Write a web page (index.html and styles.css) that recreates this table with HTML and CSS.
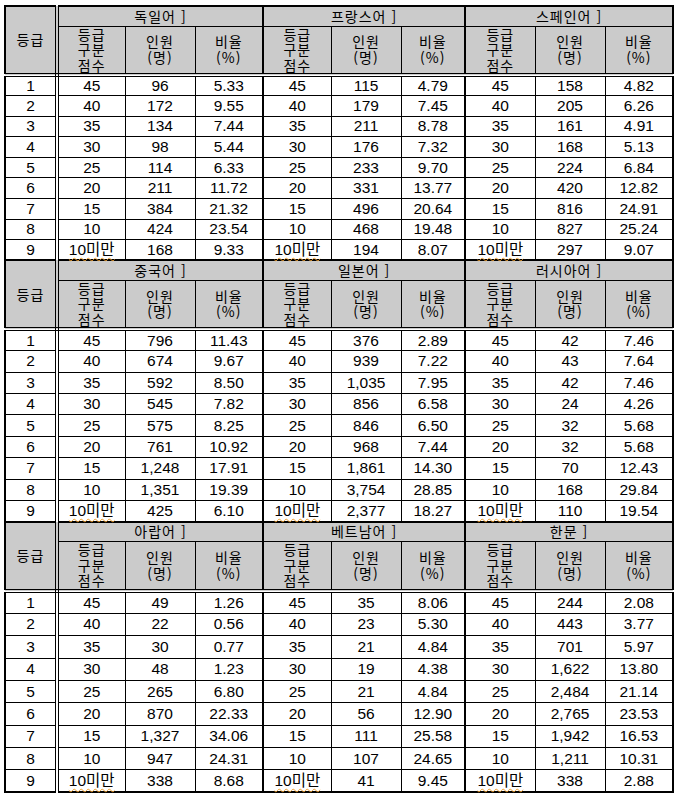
FILE: index.html
```html
<!DOCTYPE html>
<html lang="ko">
<head>
<meta charset="utf-8">
<title>등급 분포</title>
<link rel="stylesheet" href="styles.css">
</head>
<body>
<table class="grid">
<colgroup>
<col class="c-grade"><col class="c-a"><col class="c-b"><col class="c-c">
<col class="c-a"><col class="c-b"><col class="c-c2">
<col class="c-a3"><col class="c-b"><col class="c-c">
</colgroup>
<tbody class="s1">
<tr class="hd lang"><td class="g gh" rowspan="2">등급</td><td colspan="3" class="ge">독일어 ]</td><td colspan="3" class="ge">프랑스어 ]</td><td colspan="3">스페인어 ]</td></tr>
<tr class="hd sub"><td><div class="ln">등급</div><div class="ln">구분</div><div class="ln">점수</div></td><td><div class="ln">인원</div><div class="ln">(명)</div></td><td class="ge"><div class="ln">비율</div><div class="ln">(%)</div></td><td><div class="ln">등급</div><div class="ln">구분</div><div class="ln">점수</div></td><td><div class="ln">인원</div><div class="ln">(명)</div></td><td class="ge"><div class="ln">비율</div><div class="ln">(%)</div></td><td><div class="ln">등급</div><div class="ln">구분</div><div class="ln">점수</div></td><td><div class="ln">인원</div><div class="ln">(명)</div></td><td><div class="ln">비율</div><div class="ln">(%)</div></td></tr>
<tr><td class="g">1</td><td>45</td><td>96</td><td class="ge">5.33</td><td>45</td><td>115</td><td class="ge">4.79</td><td>45</td><td>158</td><td>4.82</td></tr>
<tr><td class="g">2</td><td>40</td><td>172</td><td class="ge">9.55</td><td>40</td><td>179</td><td class="ge">7.45</td><td>40</td><td>205</td><td>6.26</td></tr>
<tr><td class="g">3</td><td>35</td><td>134</td><td class="ge">7.44</td><td>35</td><td>211</td><td class="ge">8.78</td><td>35</td><td>161</td><td>4.91</td></tr>
<tr><td class="g">4</td><td>30</td><td>98</td><td class="ge">5.44</td><td>30</td><td>176</td><td class="ge">7.32</td><td>30</td><td>168</td><td>5.13</td></tr>
<tr><td class="g">5</td><td>25</td><td>114</td><td class="ge">6.33</td><td>25</td><td>233</td><td class="ge">9.70</td><td>25</td><td>224</td><td>6.84</td></tr>
<tr><td class="g">6</td><td>20</td><td>211</td><td class="ge">11.72</td><td>20</td><td>331</td><td class="ge">13.77</td><td>20</td><td>420</td><td>12.82</td></tr>
<tr><td class="g">7</td><td>15</td><td>384</td><td class="ge">21.32</td><td>15</td><td>496</td><td class="ge">20.64</td><td>15</td><td>816</td><td>24.91</td></tr>
<tr><td class="g">8</td><td>10</td><td>424</td><td class="ge">23.54</td><td>10</td><td>468</td><td class="ge">19.48</td><td>10</td><td>827</td><td>25.24</td></tr>
<tr><td class="g">9</td><td><span class="sq">10미만</span></td><td>168</td><td class="ge">9.33</td><td><span class="sq">10미만</span></td><td>194</td><td class="ge">8.07</td><td><span class="sq">10미만</span></td><td>297</td><td>9.07</td></tr>
</tbody>
<tbody class="s2">
<tr class="hd lang top"><td class="g gh" rowspan="2">등급</td><td colspan="3" class="ge">중국어 ]</td><td colspan="3" class="ge">일본어 ]</td><td colspan="3">러시아어 ]</td></tr>
<tr class="hd sub"><td><div class="ln">등급</div><div class="ln">구분</div><div class="ln">점수</div></td><td><div class="ln">인원</div><div class="ln">(명)</div></td><td class="ge"><div class="ln">비율</div><div class="ln">(%)</div></td><td><div class="ln">등급</div><div class="ln">구분</div><div class="ln">점수</div></td><td><div class="ln">인원</div><div class="ln">(명)</div></td><td class="ge"><div class="ln">비율</div><div class="ln">(%)</div></td><td><div class="ln">등급</div><div class="ln">구분</div><div class="ln">점수</div></td><td><div class="ln">인원</div><div class="ln">(명)</div></td><td><div class="ln">비율</div><div class="ln">(%)</div></td></tr>
<tr><td class="g">1</td><td>45</td><td>796</td><td class="ge">11.43</td><td>45</td><td>376</td><td class="ge">2.89</td><td>45</td><td>42</td><td>7.46</td></tr>
<tr><td class="g">2</td><td>40</td><td>674</td><td class="ge">9.67</td><td>40</td><td>939</td><td class="ge">7.22</td><td>40</td><td>43</td><td>7.64</td></tr>
<tr><td class="g">3</td><td>35</td><td>592</td><td class="ge">8.50</td><td>35</td><td>1,035</td><td class="ge">7.95</td><td>35</td><td>42</td><td>7.46</td></tr>
<tr><td class="g">4</td><td>30</td><td>545</td><td class="ge">7.82</td><td>30</td><td>856</td><td class="ge">6.58</td><td>30</td><td>24</td><td>4.26</td></tr>
<tr><td class="g">5</td><td>25</td><td>575</td><td class="ge">8.25</td><td>25</td><td>846</td><td class="ge">6.50</td><td>25</td><td>32</td><td>5.68</td></tr>
<tr><td class="g">6</td><td>20</td><td>761</td><td class="ge">10.92</td><td>20</td><td>968</td><td class="ge">7.44</td><td>20</td><td>32</td><td>5.68</td></tr>
<tr><td class="g">7</td><td>15</td><td>1,248</td><td class="ge">17.91</td><td>15</td><td>1,861</td><td class="ge">14.30</td><td>15</td><td>70</td><td>12.43</td></tr>
<tr><td class="g">8</td><td>10</td><td>1,351</td><td class="ge">19.39</td><td>10</td><td>3,754</td><td class="ge">28.85</td><td>10</td><td>168</td><td>29.84</td></tr>
<tr><td class="g">9</td><td><span class="sq">10미만</span></td><td>425</td><td class="ge">6.10</td><td><span class="sq">10미만</span></td><td>2,377</td><td class="ge">18.27</td><td><span class="sq">10미만</span></td><td>110</td><td>19.54</td></tr>
</tbody>
<tbody class="s3">
<tr class="hd lang top"><td class="g gh" rowspan="2">등급</td><td colspan="3" class="ge">아랍어 ]</td><td colspan="3" class="ge">베트남어 ]</td><td colspan="3">한문 ]</td></tr>
<tr class="hd sub"><td><div class="ln">등급</div><div class="ln">구분</div><div class="ln">점수</div></td><td><div class="ln">인원</div><div class="ln">(명)</div></td><td class="ge"><div class="ln">비율</div><div class="ln">(%)</div></td><td><div class="ln">등급</div><div class="ln">구분</div><div class="ln">점수</div></td><td><div class="ln">인원</div><div class="ln">(명)</div></td><td class="ge"><div class="ln">비율</div><div class="ln">(%)</div></td><td><div class="ln">등급</div><div class="ln">구분</div><div class="ln">점수</div></td><td><div class="ln">인원</div><div class="ln">(명)</div></td><td><div class="ln">비율</div><div class="ln">(%)</div></td></tr>
<tr><td class="g">1</td><td>45</td><td>49</td><td class="ge">1.26</td><td>45</td><td>35</td><td class="ge">8.06</td><td>45</td><td>244</td><td>2.08</td></tr>
<tr><td class="g">2</td><td>40</td><td>22</td><td class="ge">0.56</td><td>40</td><td>23</td><td class="ge">5.30</td><td>40</td><td>443</td><td>3.77</td></tr>
<tr><td class="g">3</td><td>35</td><td>30</td><td class="ge">0.77</td><td>35</td><td>21</td><td class="ge">4.84</td><td>35</td><td>701</td><td>5.97</td></tr>
<tr><td class="g">4</td><td>30</td><td>48</td><td class="ge">1.23</td><td>30</td><td>19</td><td class="ge">4.38</td><td>30</td><td>1,622</td><td>13.80</td></tr>
<tr><td class="g">5</td><td>25</td><td>265</td><td class="ge">6.80</td><td>25</td><td>21</td><td class="ge">4.84</td><td>25</td><td>2,484</td><td>21.14</td></tr>
<tr><td class="g">6</td><td>20</td><td>870</td><td class="ge">22.33</td><td>20</td><td>56</td><td class="ge">12.90</td><td>20</td><td>2,765</td><td>23.53</td></tr>
<tr><td class="g">7</td><td>15</td><td>1,327</td><td class="ge">34.06</td><td>15</td><td>111</td><td class="ge">25.58</td><td>15</td><td>1,942</td><td>16.53</td></tr>
<tr><td class="g">8</td><td>10</td><td>947</td><td class="ge">24.31</td><td>10</td><td>107</td><td class="ge">24.65</td><td>10</td><td>1,211</td><td>10.31</td></tr>
<tr><td class="g">9</td><td><span class="sq">10미만</span></td><td>338</td><td class="ge">8.68</td><td><span class="sq">10미만</span></td><td>41</td><td class="ge">9.45</td><td><span class="sq">10미만</span></td><td>338</td><td>2.88</td></tr>
</tbody>
</table>
</body>
</html>
```
FILE: styles.css
```css
html, body {
  margin: 0;
  padding: 0;
  background: #fff;
}

.grid {
  margin: 5px 0 0 4px;
  border-collapse: collapse;
  table-layout: fixed;
  width: 670px;
  border: 2px solid #000;
  font-family: "Liberation Sans", "Noto Sans CJK KR", sans-serif;
  font-size: 15.5px;
  color: #000;
}

.c-grade { width: 52px; }
.c-a { width: 68px; }
.c-a3 { width: 70px; }
.c-b { width: 70px; }
.c-c { width: 68px; }
.c-c2 { width: 64px; }

.grid td {
  border: 1px solid #000;
  padding: 0;
  text-align: center;
  vertical-align: middle;
  line-height: 16px;
  white-space: nowrap;
}

.grid td.g {
  border-right: 4px double #000;
}

.grid td.ge {
  border-right: 2px solid #000;
}

.grid .top td {
  border-top: 2px solid #000;
}

.grid .hd td {
  background: #cbcbcb;
  font-family: "Noto Sans CJK KR", sans-serif;
  font-size: 14px;
  letter-spacing: 1px;
  line-height: 15.5px;
}

.grid .ln {
  height: 15.5px;
  line-height: 15.5px;
}

.grid .sub td,
.grid td.gh {
  border-bottom: 4px double #000;
}

.s1 tr { height: 20.6px; }
.s2 tr { height: 21.4px; }
.s3 tr { height: 22.4px; }

.s1 .lang, .s2 .lang, .s3 .lang { height: 20px; }
.s1 .sub, .s2 .sub, .s3 .sub { height: 48px; }

.sq {
  text-decoration: underline wavy #f0a030;
  text-decoration-thickness: 1px;
  text-underline-offset: 2px;
}
```
